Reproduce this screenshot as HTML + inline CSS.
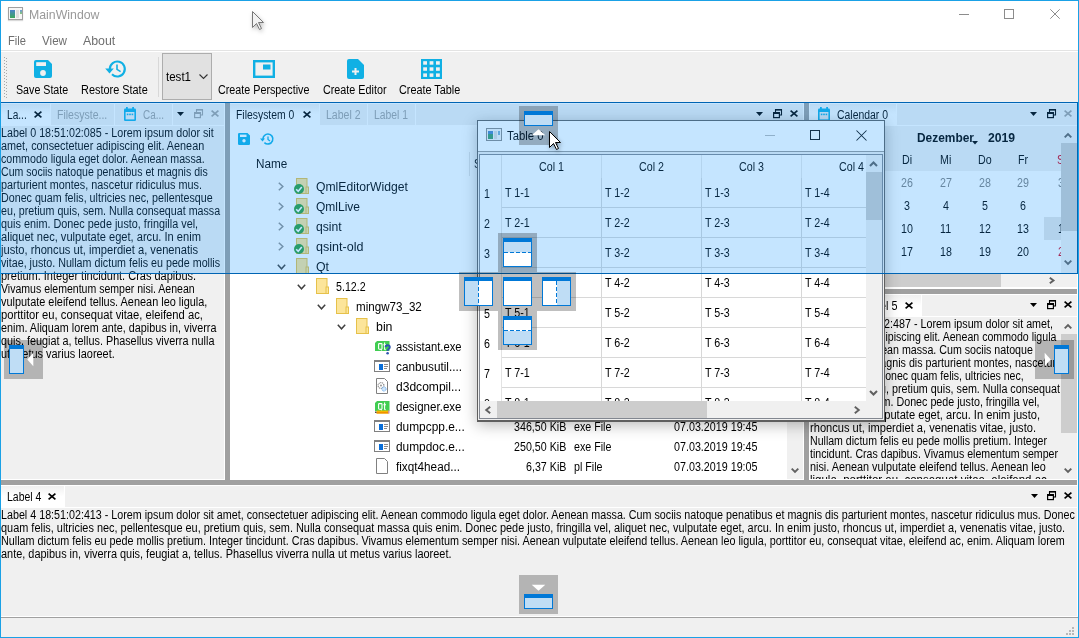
<!DOCTYPE html>
<html><head><meta charset="utf-8"><style>
html,body{margin:0;padding:0;}
body{width:1079px;height:638px;overflow:hidden;position:relative;background:#f0f0f0;font-family:"Liberation Sans",sans-serif;}
.tx{position:absolute;white-space:pre;transform-origin:0 0;}
svg{overflow:visible}
</style></head><body>
<div style="position:absolute;left:0px;top:0px;width:1079px;height:30px;background:#fff"></div>
<div style="position:absolute;left:0px;top:30px;width:1079px;height:20px;background:#fff"></div>
<div style="position:absolute;left:0px;top:50px;width:1079px;height:1px;background:#e3e3e3"></div>
<div style="position:absolute;left:0px;top:51px;width:1079px;height:1px;background:#fff"></div>
<div style="position:absolute;left:8px;top:7px;width:15px;height:13px;box-sizing:border-box;border:1px solid #a0a0a0;background:#f6f6f6;box-shadow:0 1px 1px rgba(0,0,0,0.15)"></div>
<div style="position:absolute;left:10px;top:10px;width:5px;height:8px;background:linear-gradient(#4a82c8,#3aa85a)"></div>
<div style="position:absolute;left:16px;top:10px;width:3px;height:8px;background:#dedede"></div>
<div style="position:absolute;left:20px;top:10px;width:2px;height:4px;background:linear-gradient(#6a9ad8,#8ac878)"></div>
<div class="tx" style="left:28.70px;top:8px;color:#999;font:13.5px 'Liberation Sans';line-height:13px;transform:scaleX(0.9123);">MainWindow</div>
<div style="position:absolute;left:959px;top:14px;width:10px;height:1px;background:#8c8c8c"></div>
<div style="position:absolute;left:1004px;top:9px;width:10px;height:10px;box-sizing:border-box;border:1px solid #8c8c8c"></div>
<svg style="position:absolute;left:1050px;top:9px;" width="10" height="10" viewBox="0 0 10 10"><path d="M0.3 0.3L9.7 9.7M9.7 0.3L0.3 9.7" stroke="#8c8c8c" stroke-width="1"/></svg>
<div class="tx" style="left:8.30px;top:35px;color:#6f6f6f;font:12px 'Liberation Sans';line-height:13px;transform:scaleX(0.9309);">File</div>
<div class="tx" style="left:42.00px;top:35px;color:#6f6f6f;font:12px 'Liberation Sans';line-height:13px;transform:scaleX(0.9693);">View</div>
<div class="tx" style="left:83.30px;top:35px;color:#6f6f6f;font:12px 'Liberation Sans';line-height:13px;transform:scaleX(1.0300);">About</div>
<div style="position:absolute;left:4px;top:57px;width:1px;height:1px;background:#a8a8a8"></div>
<div style="position:absolute;left:6px;top:58px;width:1px;height:1px;background:#a8a8a8"></div>
<div style="position:absolute;left:4px;top:60px;width:1px;height:1px;background:#a8a8a8"></div>
<div style="position:absolute;left:6px;top:61px;width:1px;height:1px;background:#a8a8a8"></div>
<div style="position:absolute;left:4px;top:63px;width:1px;height:1px;background:#a8a8a8"></div>
<div style="position:absolute;left:6px;top:64px;width:1px;height:1px;background:#a8a8a8"></div>
<div style="position:absolute;left:4px;top:66px;width:1px;height:1px;background:#a8a8a8"></div>
<div style="position:absolute;left:6px;top:67px;width:1px;height:1px;background:#a8a8a8"></div>
<div style="position:absolute;left:4px;top:69px;width:1px;height:1px;background:#a8a8a8"></div>
<div style="position:absolute;left:6px;top:70px;width:1px;height:1px;background:#a8a8a8"></div>
<div style="position:absolute;left:4px;top:72px;width:1px;height:1px;background:#a8a8a8"></div>
<div style="position:absolute;left:6px;top:73px;width:1px;height:1px;background:#a8a8a8"></div>
<div style="position:absolute;left:4px;top:75px;width:1px;height:1px;background:#a8a8a8"></div>
<div style="position:absolute;left:6px;top:76px;width:1px;height:1px;background:#a8a8a8"></div>
<div style="position:absolute;left:4px;top:78px;width:1px;height:1px;background:#a8a8a8"></div>
<div style="position:absolute;left:6px;top:79px;width:1px;height:1px;background:#a8a8a8"></div>
<div style="position:absolute;left:4px;top:81px;width:1px;height:1px;background:#a8a8a8"></div>
<div style="position:absolute;left:6px;top:82px;width:1px;height:1px;background:#a8a8a8"></div>
<div style="position:absolute;left:4px;top:84px;width:1px;height:1px;background:#a8a8a8"></div>
<div style="position:absolute;left:6px;top:85px;width:1px;height:1px;background:#a8a8a8"></div>
<div style="position:absolute;left:4px;top:87px;width:1px;height:1px;background:#a8a8a8"></div>
<div style="position:absolute;left:6px;top:88px;width:1px;height:1px;background:#a8a8a8"></div>
<div style="position:absolute;left:4px;top:90px;width:1px;height:1px;background:#a8a8a8"></div>
<div style="position:absolute;left:6px;top:91px;width:1px;height:1px;background:#a8a8a8"></div>
<div style="position:absolute;left:4px;top:93px;width:1px;height:1px;background:#a8a8a8"></div>
<div style="position:absolute;left:6px;top:94px;width:1px;height:1px;background:#a8a8a8"></div>
<div style="position:absolute;left:4px;top:96px;width:1px;height:1px;background:#a8a8a8"></div>
<div style="position:absolute;left:6px;top:97px;width:1px;height:1px;background:#a8a8a8"></div>
<svg style="position:absolute;left:34px;top:60px;" width="18" height="18" viewBox="0 0 18 18"><path d="M0 2a2 2 0 0 1 2-2h12l4 4v12a2 2 0 0 1-2 2H2a2 2 0 0 1-2-2z" fill="#10b0e4"/><rect x="2.2" y="2.2" width="9.8" height="3.8" fill="#f0f0f0"/><circle cx="9" cy="13" r="2.9" fill="#f0f0f0"/></svg>
<div class="tx" style="left:15.60px;top:84px;color:#000;font:12px 'Liberation Sans';line-height:13px;transform:scaleX(0.8892);">Save State</div>
<svg style="position:absolute;left:104px;top:59px;" width="22" height="20" viewBox="0 0 22 20"><path d="M5.8 10A7.5 7.5 0 1 1 8 15.3" fill="none" stroke="#10b0e4" stroke-width="2.1"/><path d="M1.2 9.6H9.8L5.5 14.4z" fill="#10b0e4"/><path d="M13 5.6V10.4L16.6 12.6" fill="none" stroke="#10b0e4" stroke-width="1.6"/></svg>
<div class="tx" style="left:81.20px;top:84px;color:#000;font:12px 'Liberation Sans';line-height:13px;transform:scaleX(0.9091);">Restore State</div>
<div style="position:absolute;left:158px;top:57px;width:1px;height:40px;background:#d8d8d8"></div>
<div style="position:absolute;left:162px;top:53px;width:50px;height:47px;box-sizing:border-box;border:1px solid #adadad;background:#e1e1e1"></div>
<div class="tx" style="left:165.70px;top:71px;color:#000;font:12px 'Liberation Sans';line-height:13px;transform:scaleX(0.9610);">test1</div>
<svg style="position:absolute;left:199px;top:74px;" width="9" height="6" viewBox="0 0 9 6"><path d="M0.5 0.5L4.5 4.5L8.5 0.5" fill="none" stroke="#333" stroke-width="1.1"/></svg>
<svg style="position:absolute;left:253px;top:60px;" width="22" height="18" viewBox="0 0 22 18"><rect x="1.2" y="1.2" width="19.6" height="15.6" fill="none" stroke="#10b0e4" stroke-width="2.4"/><rect x="10" y="4.5" width="7.5" height="5" fill="#10b0e4"/></svg>
<div class="tx" style="left:217.60px;top:84px;color:#000;font:12px 'Liberation Sans';line-height:13px;transform:scaleX(0.8957);">Create Perspective</div>
<svg style="position:absolute;left:347px;top:59px;" width="17" height="20" viewBox="0 0 17 20"><path d="M0 2a2 2 0 0 1 2-2h9l6 6v12a2 2 0 0 1-2 2H2a2 2 0 0 1-2-2z" fill="#10b0e4"/><path d="M8.5 9v7M5 12.5h7" stroke="#f0f0f0" stroke-width="2"/></svg>
<div class="tx" style="left:322.50px;top:84px;color:#000;font:12px 'Liberation Sans';line-height:13px;transform:scaleX(0.8982);">Create Editor</div>
<svg style="position:absolute;left:421px;top:59px;" width="21" height="20" viewBox="0 0 21 20"><rect x="0" y="0" width="21" height="20" fill="#10b0e4"/><rect x="2.2" y="2.2" width="3.8" height="3.5" fill="#f0f0f0"/><rect x="2.2" y="8.3" width="3.8" height="3.5" fill="#f0f0f0"/><rect x="2.2" y="14.399999999999999" width="3.8" height="3.5" fill="#f0f0f0"/><rect x="8.600000000000001" y="2.2" width="3.8" height="3.5" fill="#f0f0f0"/><rect x="8.600000000000001" y="8.3" width="3.8" height="3.5" fill="#f0f0f0"/><rect x="8.600000000000001" y="14.399999999999999" width="3.8" height="3.5" fill="#f0f0f0"/><rect x="15.0" y="2.2" width="3.8" height="3.5" fill="#f0f0f0"/><rect x="15.0" y="8.3" width="3.8" height="3.5" fill="#f0f0f0"/><rect x="15.0" y="14.399999999999999" width="3.8" height="3.5" fill="#f0f0f0"/></svg>
<div class="tx" style="left:399.30px;top:84px;color:#000;font:12px 'Liberation Sans';line-height:13px;transform:scaleX(0.9039);">Create Table</div>
<div style="position:absolute;left:0px;top:616px;width:1079px;height:1px;background:#fff"></div>
<div style="position:absolute;left:0px;top:617px;width:1079px;height:1px;background:#a0a0a0"></div>
<div style="position:absolute;left:225px;top:102px;width:5px;height:378px;background:#a0a0a0"></div>
<div style="position:absolute;left:804px;top:102px;width:5px;height:378px;background:#a0a0a0"></div>
<div style="position:absolute;left:809px;top:289px;width:269px;height:5px;background:#a0a0a0"></div>
<div style="position:absolute;left:0px;top:480px;width:1079px;height:5px;background:#a0a0a0"></div>
<div style="position:absolute;left:1px;top:102px;width:224px;height:378px;background:#f0f0f0"></div>
<div style="position:absolute;left:1px;top:103px;width:224px;height:1px;background:#fff"></div>
<div style="position:absolute;left:1px;top:125px;width:224px;height:1px;background:#fff"></div>
<div style="position:absolute;left:1px;top:104px;width:49px;height:21px;background:linear-gradient(#f0f0f0,#fff 50%,#fff)"></div>
<div style="position:absolute;left:50px;top:104px;width:1px;height:21px;background:#fff"></div>
<div class="tx" style="left:6.60px;top:109px;color:#000;font:12px 'Liberation Sans';line-height:13px;transform:scaleX(0.8437);">La...</div>
<svg style="position:absolute;left:34px;top:111px;" width="8" height="7" viewBox="0 0 8 7"><path d="M0.6 0.6L7.4 6.4M7.4 0.6L0.6 6.4" stroke="#000" stroke-width="1.7"/></svg>
<div style="position:absolute;left:51px;top:104px;width:63px;height:21px;background:#f0f0f0"></div>
<div style="position:absolute;left:114px;top:104px;width:1px;height:21px;background:#fff"></div>
<div class="tx" style="left:56.70px;top:109px;color:#a0a0a0;font:12px 'Liberation Sans';line-height:13px;transform:scaleX(0.8771);">Filesyste...</div>
<div style="position:absolute;left:115px;top:104px;width:57px;height:21px;background:#f0f0f0"></div>
<div style="position:absolute;left:172px;top:104px;width:1px;height:21px;background:#fff"></div>
<svg style="position:absolute;left:124px;top:107px;" width="12" height="14" viewBox="0 0 12 14"><rect x="0" y="1.5" width="12" height="12.5" rx="1.2" fill="#10b0e4"/><rect x="1.6" y="5" width="8.8" height="7.4" fill="#f0f0f0"/><rect x="2" y="0" width="1.8" height="3" fill="#10b0e4"/><rect x="8.2" y="0" width="1.8" height="3" fill="#10b0e4"/><rect x="2.8" y="6.6" width="1.6" height="1.6" fill="#10b0e4"/><rect x="5.2" y="6.6" width="1.6" height="1.6" fill="#10b0e4"/><rect x="7.6" y="6.6" width="1.6" height="1.6" fill="#10b0e4"/></svg>
<div class="tx" style="left:143.00px;top:109px;color:#a0a0a0;font:12px 'Liberation Sans';line-height:13px;transform:scaleX(0.8287);">Ca...</div>
<svg style="position:absolute;left:177px;top:112px;" width="7" height="4" viewBox="0 0 7 4"><path d="M0 0H7L3.5 4z" fill="#000"/></svg>
<svg style="position:absolute;left:194px;top:109px;" width="9" height="9" viewBox="0 0 9 9"><path d="M2.5 3V0.5h6v5.5H6" fill="none" stroke="#a0a0a0" stroke-width="1.1"/><rect x="2" y="0" width="7" height="1.6" fill="#a0a0a0"/><rect x="0.6" y="3.6" width="5.8" height="5" fill="none" stroke="#a0a0a0" stroke-width="1.2"/><rect x="0" y="3" width="7" height="2" fill="#a0a0a0"/></svg>
<svg style="position:absolute;left:211px;top:110px;" width="8" height="7" viewBox="0 0 8 7"><path d="M0.6 0.6L7.4 6.4M7.4 0.6L0.6 6.4" stroke="#a0a0a0" stroke-width="1.7"/></svg>
<div class="tx" style="left:0.50px;top:127px;color:#000;font:12px 'Liberation Sans';line-height:13px;transform:scaleX(0.8932);">Label 0 18:51:02:085 - Lorem ipsum dolor sit</div>
<div class="tx" style="left:0.50px;top:140px;color:#000;font:12px 'Liberation Sans';line-height:13px;transform:scaleX(0.9039);">amet, consectetuer adipiscing elit. Aenean</div>
<div class="tx" style="left:0.50px;top:153px;color:#000;font:12px 'Liberation Sans';line-height:13px;transform:scaleX(0.8873);">commodo ligula eget dolor. Aenean massa.</div>
<div class="tx" style="left:0.50px;top:166px;color:#000;font:12px 'Liberation Sans';line-height:13px;transform:scaleX(0.8803);">Cum sociis natoque penatibus et magnis dis</div>
<div class="tx" style="left:0.50px;top:179px;color:#000;font:12px 'Liberation Sans';line-height:13px;transform:scaleX(0.9023);">parturient montes, nascetur ridiculus mus.</div>
<div class="tx" style="left:0.50px;top:192px;color:#000;font:12px 'Liberation Sans';line-height:13px;transform:scaleX(0.8915);">Donec quam felis, ultricies nec, pellentesque</div>
<div class="tx" style="left:0.50px;top:205px;color:#000;font:12px 'Liberation Sans';line-height:13px;transform:scaleX(0.8902);">eu, pretium quis, sem. Nulla consequat massa</div>
<div class="tx" style="left:0.50px;top:218px;color:#000;font:12px 'Liberation Sans';line-height:13px;transform:scaleX(0.9037);">quis enim. Donec pede justo, fringilla vel,</div>
<div class="tx" style="left:0.50px;top:231px;color:#000;font:12px 'Liberation Sans';line-height:13px;transform:scaleX(0.9249);">aliquet nec, vulputate eget, arcu. In enim</div>
<div class="tx" style="left:0.50px;top:244px;color:#000;font:12px 'Liberation Sans';line-height:13px;transform:scaleX(0.9292);">justo, rhoncus ut, imperdiet a, venenatis</div>
<div class="tx" style="left:0.50px;top:257px;color:#000;font:12px 'Liberation Sans';line-height:13px;transform:scaleX(0.8927);">vitae, justo. Nullam dictum felis eu pede mollis</div>
<div class="tx" style="left:0.50px;top:270px;color:#000;font:12px 'Liberation Sans';line-height:13px;transform:scaleX(0.9169);">pretium. Integer tincidunt. Cras dapibus.</div>
<div class="tx" style="left:0.50px;top:283px;color:#000;font:12px 'Liberation Sans';line-height:13px;transform:scaleX(0.8779);">Vivamus elementum semper nisi. Aenean</div>
<div class="tx" style="left:0.50px;top:296px;color:#000;font:12px 'Liberation Sans';line-height:13px;transform:scaleX(0.9099);">vulputate eleifend tellus. Aenean leo ligula,</div>
<div class="tx" style="left:0.50px;top:309px;color:#000;font:12px 'Liberation Sans';line-height:13px;transform:scaleX(0.9341);">porttitor eu, consequat vitae, eleifend ac,</div>
<div class="tx" style="left:0.50px;top:322px;color:#000;font:12px 'Liberation Sans';line-height:13px;transform:scaleX(0.8996);">enim. Aliquam lorem ante, dapibus in, viverra</div>
<div class="tx" style="left:0.50px;top:335px;color:#000;font:12px 'Liberation Sans';line-height:13px;transform:scaleX(0.9038);">quis, feugiat a, tellus. Phasellus viverra nulla</div>
<div class="tx" style="left:0.50px;top:348px;color:#000;font:12px 'Liberation Sans';line-height:13px;transform:scaleX(0.9124);">ut metus varius laoreet.</div>
<div style="position:absolute;left:1px;top:485px;width:1077px;height:131px;background:#f0f0f0"></div>
<div style="position:absolute;left:1px;top:485px;width:1077px;height:1px;background:#fff"></div>
<div style="position:absolute;left:1px;top:507px;width:1077px;height:1px;background:#fff"></div>
<div style="position:absolute;left:1px;top:486px;width:63px;height:21px;background:linear-gradient(#f0f0f0,#fff 50%,#fff)"></div>
<div style="position:absolute;left:64px;top:486px;width:1px;height:21px;background:#fff"></div>
<div class="tx" style="left:6.60px;top:491px;color:#000;font:12px 'Liberation Sans';line-height:13px;transform:scaleX(0.8738);">Label 4</div>
<svg style="position:absolute;left:48px;top:493px;" width="8" height="7" viewBox="0 0 8 7"><path d="M0.6 0.6L7.4 6.4M7.4 0.6L0.6 6.4" stroke="#000" stroke-width="1.7"/></svg>
<svg style="position:absolute;left:1031px;top:494px;" width="7" height="4" viewBox="0 0 7 4"><path d="M0 0H7L3.5 4z" fill="#000"/></svg>
<svg style="position:absolute;left:1047px;top:491px;" width="9" height="9" viewBox="0 0 9 9"><path d="M2.5 3V0.5h6v5.5H6" fill="none" stroke="#000" stroke-width="1.1"/><rect x="2" y="0" width="7" height="1.6" fill="#000"/><rect x="0.6" y="3.6" width="5.8" height="5" fill="none" stroke="#000" stroke-width="1.2"/><rect x="0" y="3" width="7" height="2" fill="#000"/></svg>
<svg style="position:absolute;left:1064px;top:492px;" width="8" height="7" viewBox="0 0 8 7"><path d="M0.6 0.6L7.4 6.4M7.4 0.6L0.6 6.4" stroke="#000" stroke-width="1.7"/></svg>
<div class="tx" style="left:1.00px;top:509px;color:#000;font:12px 'Liberation Sans';line-height:13px;transform:scaleX(0.8938);">Label 4 18:51:02:413 - Lorem ipsum dolor sit amet, consectetuer adipiscing elit. Aenean commodo ligula eget dolor. Aenean massa. Cum sociis natoque penatibus et magnis dis parturient montes, nascetur ridiculus mus. Donec</div>
<div class="tx" style="left:1.00px;top:522px;color:#000;font:12px 'Liberation Sans';line-height:13px;transform:scaleX(0.9100);">quam felis, ultricies nec, pellentesque eu, pretium quis, sem. Nulla consequat massa quis enim. Donec pede justo, fringilla vel, aliquet nec, vulputate eget, arcu. In enim justo, rhoncus ut, imperdiet a, venenatis vitae, justo.</div>
<div class="tx" style="left:1.00px;top:535px;color:#000;font:12px 'Liberation Sans';line-height:13px;transform:scaleX(0.8991);">Nullam dictum felis eu pede mollis pretium. Integer tincidunt. Cras dapibus. Vivamus elementum semper nisi. Aenean vulputate eleifend tellus. Aenean leo ligula, porttitor eu, consequat vitae, eleifend ac, enim. Aliquam lorem</div>
<div class="tx" style="left:1.00px;top:548px;color:#000;font:12px 'Liberation Sans';line-height:13px;transform:scaleX(0.9102);">ante, dapibus in, viverra quis, feugiat a, tellus. Phasellus viverra nulla ut metus varius laoreet.</div>
<div style="position:absolute;left:230px;top:102px;width:574px;height:378px;background:#f0f0f0"></div>
<div style="position:absolute;left:230px;top:103px;width:574px;height:1px;background:#fff"></div>
<div style="position:absolute;left:230px;top:125px;width:574px;height:1px;background:#fff"></div>
<div style="position:absolute;left:230px;top:104px;width:89px;height:21px;background:linear-gradient(#f0f0f0,#fff 50%,#fff)"></div>
<div style="position:absolute;left:319px;top:104px;width:1px;height:21px;background:#fff"></div>
<div class="tx" style="left:236.00px;top:109px;color:#000;font:12px 'Liberation Sans';line-height:13px;transform:scaleX(0.8657);">Filesystem 0</div>
<svg style="position:absolute;left:303px;top:111px;" width="8" height="7" viewBox="0 0 8 7"><path d="M0.6 0.6L7.4 6.4M7.4 0.6L0.6 6.4" stroke="#000" stroke-width="1.7"/></svg>
<div style="position:absolute;left:320px;top:104px;width:47px;height:21px;background:#f0f0f0"></div>
<div style="position:absolute;left:367px;top:104px;width:1px;height:21px;background:#fff"></div>
<div class="tx" style="left:325.50px;top:109px;color:#a0a0a0;font:12px 'Liberation Sans';line-height:13px;transform:scaleX(0.8763);">Label 2</div>
<div style="position:absolute;left:368px;top:104px;width:47px;height:21px;background:#f0f0f0"></div>
<div style="position:absolute;left:415px;top:104px;width:1px;height:21px;background:#fff"></div>
<div class="tx" style="left:373.50px;top:109px;color:#a0a0a0;font:12px 'Liberation Sans';line-height:13px;transform:scaleX(0.8636);">Label 1</div>
<svg style="position:absolute;left:756px;top:112px;" width="7" height="4" viewBox="0 0 7 4"><path d="M0 0H7L3.5 4z" fill="#000"/></svg>
<svg style="position:absolute;left:773px;top:109px;" width="9" height="9" viewBox="0 0 9 9"><path d="M2.5 3V0.5h6v5.5H6" fill="none" stroke="#000" stroke-width="1.1"/><rect x="2" y="0" width="7" height="1.6" fill="#000"/><rect x="0.6" y="3.6" width="5.8" height="5" fill="none" stroke="#000" stroke-width="1.2"/><rect x="0" y="3" width="7" height="2" fill="#000"/></svg>
<svg style="position:absolute;left:790px;top:110px;" width="8" height="7" viewBox="0 0 8 7"><path d="M0.6 0.6L7.4 6.4M7.4 0.6L0.6 6.4" stroke="#000" stroke-width="1.7"/></svg>
<div style="position:absolute;left:230px;top:126px;width:574px;height:354px;background:#fff"></div>
<svg style="position:absolute;left:238px;top:133px;" width="12" height="12" viewBox="0 0 12 12"><path d="M0 1.2a1.2 1.2 0 0 1 1.2-1.2h8.3l2.5 2.5v8.3a1.2 1.2 0 0 1-1.2 1.2H1.2A1.2 1.2 0 0 1 0 10.8z" fill="#10b0e4"/><rect x="2" y="1.6" width="6.5" height="2.4" fill="#fff"/><circle cx="6" cy="7.8" r="1.7" fill="#fff"/></svg>
<svg style="position:absolute;left:260px;top:133px;" width="14" height="12" viewBox="0 0 14 12"><path d="M8 1a5 5 0 1 1-3.6 8.6" fill="none" stroke="#10b0e4" stroke-width="1.6"/><path d="M3 6a5 5 0 0 1 5-5" fill="none" stroke="#10b0e4" stroke-width="1.6"/><path d="M0 5.6h5l-2.5 3z" fill="#10b0e4"/><path d="M8 3.5v3l2 1.5" fill="none" stroke="#10b0e4" stroke-width="1.3"/></svg>
<div class="tx" style="left:255.70px;top:158px;color:#000;font:12px 'Liberation Sans';line-height:13px;transform:scaleX(0.9778);">Name</div>
<div style="position:absolute;left:469px;top:152px;width:1px;height:24px;background:#e5e5e5"></div>
<div class="tx" style="left:474.00px;top:158px;color:#000;font:12px 'Liberation Sans';line-height:13px;transform:scaleX(0.8568);">Size</div>
<div style="position:absolute;left:787px;top:126px;width:16px;height:353px;background:#f0f0f0"></div>
<svg style="position:absolute;left:791px;top:468px;" width="8" height="5" viewBox="0 0 8 5"><path d="M0.7 0.7L4 4L7.3 0.7" fill="none" stroke="#606060" stroke-width="1.9"/></svg>
<svg style="position:absolute;left:278px;top:182px;" width="6" height="9" viewBox="0 0 6 9"><path d="M0.8 0.8L4.8 4.5L0.8 8.2" fill="none" stroke="#909090" stroke-width="1.5"/></svg>
<svg style="position:absolute;left:296px;top:178px;" width="14" height="16" viewBox="0 0 14 16"><rect x="0.5" y="0.5" width="10.5" height="15" fill="#fce59a" stroke="#e6c14a" stroke-width="1"/><rect x="10" y="9" width="2.5" height="6.5" fill="#fce59a" stroke="#e6c14a" stroke-width="1"/></svg>
<svg style="position:absolute;left:294px;top:184px;" width="10" height="10" viewBox="0 0 10 10"><circle cx="5" cy="5" r="5" fill="#2e9e3a"/><path d="M2.2 5.2L4.2 7.2L7.8 3" fill="none" stroke="#fff" stroke-width="1.6"/></svg>
<div class="tx" style="left:315.90px;top:181px;color:#000;font:12px 'Liberation Sans';line-height:13px;transform:scaleX(1.0144);">QmlEditorWidget</div>
<svg style="position:absolute;left:278px;top:202px;" width="6" height="9" viewBox="0 0 6 9"><path d="M0.8 0.8L4.8 4.5L0.8 8.2" fill="none" stroke="#909090" stroke-width="1.5"/></svg>
<svg style="position:absolute;left:296px;top:198px;" width="14" height="16" viewBox="0 0 14 16"><rect x="0.5" y="0.5" width="10.5" height="15" fill="#fce59a" stroke="#e6c14a" stroke-width="1"/><rect x="10" y="9" width="2.5" height="6.5" fill="#fce59a" stroke="#e6c14a" stroke-width="1"/></svg>
<svg style="position:absolute;left:294px;top:204px;" width="10" height="10" viewBox="0 0 10 10"><circle cx="5" cy="5" r="5" fill="#2e9e3a"/><path d="M2.2 5.2L4.2 7.2L7.8 3" fill="none" stroke="#fff" stroke-width="1.6"/></svg>
<div class="tx" style="left:315.90px;top:201px;color:#000;font:12px 'Liberation Sans';line-height:13px;transform:scaleX(0.9998);">QmlLive</div>
<svg style="position:absolute;left:278px;top:222px;" width="6" height="9" viewBox="0 0 6 9"><path d="M0.8 0.8L4.8 4.5L0.8 8.2" fill="none" stroke="#909090" stroke-width="1.5"/></svg>
<svg style="position:absolute;left:296px;top:218px;" width="14" height="16" viewBox="0 0 14 16"><rect x="0.5" y="0.5" width="10.5" height="15" fill="#fce59a" stroke="#e6c14a" stroke-width="1"/><rect x="10" y="9" width="2.5" height="6.5" fill="#fce59a" stroke="#e6c14a" stroke-width="1"/></svg>
<svg style="position:absolute;left:294px;top:224px;" width="10" height="10" viewBox="0 0 10 10"><circle cx="5" cy="5" r="5" fill="#2e9e3a"/><path d="M2.2 5.2L4.2 7.2L7.8 3" fill="none" stroke="#fff" stroke-width="1.6"/></svg>
<div class="tx" style="left:315.90px;top:221px;color:#000;font:12px 'Liberation Sans';line-height:13px;transform:scaleX(1.0139);">qsint</div>
<svg style="position:absolute;left:278px;top:242px;" width="6" height="9" viewBox="0 0 6 9"><path d="M0.8 0.8L4.8 4.5L0.8 8.2" fill="none" stroke="#909090" stroke-width="1.5"/></svg>
<svg style="position:absolute;left:296px;top:238px;" width="14" height="16" viewBox="0 0 14 16"><rect x="0.5" y="0.5" width="10.5" height="15" fill="#fce59a" stroke="#e6c14a" stroke-width="1"/><rect x="10" y="9" width="2.5" height="6.5" fill="#fce59a" stroke="#e6c14a" stroke-width="1"/></svg>
<svg style="position:absolute;left:294px;top:244px;" width="10" height="10" viewBox="0 0 10 10"><circle cx="5" cy="5" r="5" fill="#2e9e3a"/><path d="M2.2 5.2L4.2 7.2L7.8 3" fill="none" stroke="#fff" stroke-width="1.6"/></svg>
<div class="tx" style="left:315.90px;top:241px;color:#000;font:12px 'Liberation Sans';line-height:13px;transform:scaleX(1.0450);">qsint-old</div>
<svg style="position:absolute;left:277px;top:264px;" width="9" height="6" viewBox="0 0 9 6"><path d="M0.8 0.8L4.5 4.8L8.2 0.8" fill="none" stroke="#404040" stroke-width="1.5"/></svg>
<svg style="position:absolute;left:296px;top:258px;" width="14" height="16" viewBox="0 0 14 16"><rect x="0.5" y="0.5" width="10.5" height="15" fill="#fce59a" stroke="#e6c14a" stroke-width="1"/><rect x="10" y="9" width="2.5" height="6.5" fill="#fce59a" stroke="#e6c14a" stroke-width="1"/></svg>
<div class="tx" style="left:315.90px;top:261px;color:#000;font:12px 'Liberation Sans';line-height:13px;transform:scaleX(1.0262);">Qt</div>
<svg style="position:absolute;left:297px;top:284px;" width="9" height="6" viewBox="0 0 9 6"><path d="M0.8 0.8L4.5 4.8L8.2 0.8" fill="none" stroke="#404040" stroke-width="1.5"/></svg>
<svg style="position:absolute;left:316px;top:278px;" width="14" height="16" viewBox="0 0 14 16"><rect x="0.5" y="0.5" width="10.5" height="15" fill="#fce59a" stroke="#e6c14a" stroke-width="1"/><rect x="10" y="9" width="2.5" height="6.5" fill="#fce59a" stroke="#e6c14a" stroke-width="1"/></svg>
<div class="tx" style="left:335.90px;top:281px;color:#000;font:12px 'Liberation Sans';line-height:13px;transform:scaleX(0.8872);">5.12.2</div>
<svg style="position:absolute;left:317px;top:304px;" width="9" height="6" viewBox="0 0 9 6"><path d="M0.8 0.8L4.5 4.8L8.2 0.8" fill="none" stroke="#404040" stroke-width="1.5"/></svg>
<svg style="position:absolute;left:336px;top:298px;" width="14" height="16" viewBox="0 0 14 16"><rect x="0.5" y="0.5" width="10.5" height="15" fill="#fce59a" stroke="#e6c14a" stroke-width="1"/><rect x="10" y="9" width="2.5" height="6.5" fill="#fce59a" stroke="#e6c14a" stroke-width="1"/></svg>
<div class="tx" style="left:355.90px;top:301px;color:#000;font:12px 'Liberation Sans';line-height:13px;transform:scaleX(0.9670);">mingw73_32</div>
<svg style="position:absolute;left:337px;top:324px;" width="9" height="6" viewBox="0 0 9 6"><path d="M0.8 0.8L4.5 4.8L8.2 0.8" fill="none" stroke="#404040" stroke-width="1.5"/></svg>
<svg style="position:absolute;left:356px;top:318px;" width="14" height="16" viewBox="0 0 14 16"><rect x="0.5" y="0.5" width="10.5" height="15" fill="#fce59a" stroke="#e6c14a" stroke-width="1"/><rect x="10" y="9" width="2.5" height="6.5" fill="#fce59a" stroke="#e6c14a" stroke-width="1"/></svg>
<div class="tx" style="left:375.90px;top:321px;color:#000;font:12px 'Liberation Sans';line-height:13px;transform:scaleX(1.0304);">bin</div>
<svg style="position:absolute;left:375px;top:341px;" width="16" height="14" viewBox="0 0 16 14"><path d="M0 2L2 0H14.5V10H0z" fill="#41cd52"/><rect x="3.6" y="2.6" width="3.4" height="5.6" rx="0.6" fill="none" stroke="#fff" stroke-width="1.1"/><path d="M5.6 8L6.8 9.3" stroke="#fff" stroke-width="1.1"/><path d="M9.6 1.6V8.2Q9.6 8.8 10.8 8.8M8.4 3.7H11" fill="none" stroke="#fff" stroke-width="1.1"/><path d="M10.6 6.2Q10.6 4.2 12.6 4.2Q14.8 4.2 14.8 6.2Q14.8 7.4 13.4 8.2Q12.6 8.7 12.6 10" fill="none" stroke="#2f56b0" stroke-width="1.9"/><circle cx="12.6" cy="12.3" r="1.3" fill="#2f56b0"/></svg>
<div class="tx" style="left:395.90px;top:341px;color:#000;font:12px 'Liberation Sans';line-height:13px;transform:scaleX(0.9352);">assistant.exe</div>
<svg style="position:absolute;left:374px;top:360px;" width="16" height="12" viewBox="0 0 16 12"><rect x="0.5" y="0.5" width="15" height="11" fill="#fff" stroke="#808080"/><rect x="0" y="0" width="16" height="2" fill="#808080"/><rect x="5" y="4" width="4" height="6" fill="#0a6ed8"/><path d="M10 4.5h4M10 6.5h4M10 8.5h3" stroke="#8a8a8a" stroke-width="1"/></svg>
<div class="tx" style="left:395.90px;top:361px;color:#000;font:12px 'Liberation Sans';line-height:13px;transform:scaleX(0.9796);">canbusutil....</div>
<svg style="position:absolute;left:376px;top:378px;" width="12" height="16" viewBox="0 0 12 16"><path d="M0.5 0.5H8.5L11.5 3.5V15.5H0.5z" fill="#fff" stroke="#808080"/><circle cx="5" cy="7.5" r="2.9" fill="none" stroke="#8a8a8a" stroke-width="1.2" stroke-dasharray="1.1 0.7"/><circle cx="5" cy="7.5" r="0.9" fill="#8a8a8a"/><circle cx="8" cy="11" r="2.1" fill="#cfe6fb" stroke="#5aa0e6" stroke-width="0.9" stroke-dasharray="0.9 0.5"/></svg>
<div class="tx" style="left:395.90px;top:381px;color:#000;font:12px 'Liberation Sans';line-height:13px;transform:scaleX(1.0046);">d3dcompil...</div>
<svg style="position:absolute;left:375px;top:401px;" width="16" height="14" viewBox="0 0 16 14"><path d="M0 2L2 0H14.5V10H0z" fill="#41cd52"/><rect x="3.6" y="2.6" width="3.4" height="5.6" rx="0.6" fill="none" stroke="#fff" stroke-width="1.1"/><path d="M5.6 8L6.8 9.3" stroke="#fff" stroke-width="1.1"/><path d="M9.6 1.6V8.2Q9.6 8.8 10.8 8.8M8.4 3.7H11" fill="none" stroke="#fff" stroke-width="1.1"/><rect x="1.5" y="9.5" width="12" height="3" fill="#f5b800"/><rect x="1.5" y="11" width="12" height="1.5" fill="#f09000"/><rect x="13" y="9.5" width="1.5" height="3" fill="#d090a0"/><rect x="0" y="10.5" width="1.5" height="1.5" fill="#505050"/></svg>
<div class="tx" style="left:395.90px;top:401px;color:#000;font:12px 'Liberation Sans';line-height:13px;transform:scaleX(0.9625);">designer.exe</div>
<svg style="position:absolute;left:374px;top:420px;" width="16" height="12" viewBox="0 0 16 12"><rect x="0.5" y="0.5" width="15" height="11" fill="#fff" stroke="#808080"/><rect x="0" y="0" width="16" height="2" fill="#808080"/><rect x="5" y="4" width="4" height="6" fill="#0a6ed8"/><path d="M10 4.5h4M10 6.5h4M10 8.5h3" stroke="#8a8a8a" stroke-width="1"/></svg>
<div class="tx" style="left:395.90px;top:421px;color:#000;font:12px 'Liberation Sans';line-height:13px;transform:scaleX(0.9903);">dumpcpp.e...</div>
<svg style="position:absolute;left:374px;top:440px;" width="16" height="12" viewBox="0 0 16 12"><rect x="0.5" y="0.5" width="15" height="11" fill="#fff" stroke="#808080"/><rect x="0" y="0" width="16" height="2" fill="#808080"/><rect x="5" y="4" width="4" height="6" fill="#0a6ed8"/><path d="M10 4.5h4M10 6.5h4M10 8.5h3" stroke="#8a8a8a" stroke-width="1"/></svg>
<div class="tx" style="left:395.90px;top:441px;color:#000;font:12px 'Liberation Sans';line-height:13px;transform:scaleX(0.9903);">dumpdoc.e...</div>
<svg style="position:absolute;left:376px;top:458px;" width="12" height="16" viewBox="0 0 12 16"><path d="M0.5 0.5H8.5L11.5 3.5V15.5H0.5z" fill="#fff" stroke="#808080"/></svg>
<div class="tx" style="left:395.90px;top:461px;color:#000;font:12px 'Liberation Sans';line-height:13px;transform:scaleX(0.9789);">fixqt4head...</div>
<div class="tx" style="left:514.25px;top:421px;color:#000;font:12px 'Liberation Sans';line-height:13px;transform:scaleX(0.8900);">346,50 KiB</div>
<div class="tx" style="left:573.70px;top:421px;color:#000;font:12px 'Liberation Sans';line-height:13px;transform:scaleX(0.8900);">exe File</div>
<div class="tx" style="left:673.50px;top:421px;color:#000;font:12px 'Liberation Sans';line-height:13px;transform:scaleX(0.8938);">07.03.2019 19:45</div>
<div class="tx" style="left:514.25px;top:441px;color:#000;font:12px 'Liberation Sans';line-height:13px;transform:scaleX(0.8900);">250,50 KiB</div>
<div class="tx" style="left:573.70px;top:441px;color:#000;font:12px 'Liberation Sans';line-height:13px;transform:scaleX(0.8900);">exe File</div>
<div class="tx" style="left:673.50px;top:441px;color:#000;font:12px 'Liberation Sans';line-height:13px;transform:scaleX(0.8938);">07.03.2019 19:45</div>
<div class="tx" style="left:526.13px;top:461px;color:#000;font:12px 'Liberation Sans';line-height:13px;transform:scaleX(0.8900);">6,37 KiB</div>
<div class="tx" style="left:573.70px;top:461px;color:#000;font:12px 'Liberation Sans';line-height:13px;transform:scaleX(0.8900);">pl File</div>
<div class="tx" style="left:673.50px;top:461px;color:#000;font:12px 'Liberation Sans';line-height:13px;transform:scaleX(0.8938);">07.03.2019 19:05</div>
<div style="position:absolute;left:1px;top:479px;width:224px;height:1px;background:#fff"></div>
<div style="position:absolute;left:809px;top:479px;width:269px;height:1px;background:#fff"></div>
<div style="position:absolute;left:809px;top:102px;width:269px;height:187px;background:#f0f0f0"></div>
<div style="position:absolute;left:809px;top:103px;width:269px;height:1px;background:#fff"></div>
<div style="position:absolute;left:809px;top:125px;width:269px;height:1px;background:#fff"></div>
<div style="position:absolute;left:809px;top:104px;width:87px;height:21px;background:linear-gradient(#f0f0f0,#fff 50%,#fff)"></div>
<div style="position:absolute;left:896px;top:104px;width:1px;height:21px;background:#fff"></div>
<svg style="position:absolute;left:818px;top:107px;" width="12" height="14" viewBox="0 0 12 14"><rect x="0" y="1.5" width="12" height="12.5" rx="1.2" fill="#10b0e4"/><rect x="1.6" y="5" width="8.8" height="7.4" fill="#f0f0f0"/><rect x="2" y="0" width="1.8" height="3" fill="#10b0e4"/><rect x="8.2" y="0" width="1.8" height="3" fill="#10b0e4"/><rect x="2.8" y="6.6" width="1.6" height="1.6" fill="#10b0e4"/><rect x="5.2" y="6.6" width="1.6" height="1.6" fill="#10b0e4"/><rect x="7.6" y="6.6" width="1.6" height="1.6" fill="#10b0e4"/></svg>
<div class="tx" style="left:837.00px;top:109px;color:#000;font:12px 'Liberation Sans';line-height:13px;transform:scaleX(0.8687);">Calendar 0</div>
<svg style="position:absolute;left:1030px;top:112px;" width="7" height="4" viewBox="0 0 7 4"><path d="M0 0H7L3.5 4z" fill="#000"/></svg>
<svg style="position:absolute;left:1047px;top:109px;" width="9" height="9" viewBox="0 0 9 9"><path d="M2.5 3V0.5h6v5.5H6" fill="none" stroke="#000" stroke-width="1.1"/><rect x="2" y="0" width="7" height="1.6" fill="#000"/><rect x="0.6" y="3.6" width="5.8" height="5" fill="none" stroke="#000" stroke-width="1.2"/><rect x="0" y="3" width="7" height="2" fill="#000"/></svg>
<svg style="position:absolute;left:1064px;top:110px;" width="8" height="7" viewBox="0 0 8 7"><path d="M0.6 0.6L7.4 6.4M7.4 0.6L0.6 6.4" stroke="#a0a0a0" stroke-width="1.7"/></svg>
<div style="position:absolute;left:809px;top:126px;width:252px;height:45px;background:#f0f0f0"></div>
<div style="position:absolute;left:809px;top:171px;width:252px;height:102px;background:#fff"></div>
<div class="tx" style="left:916.50px;top:132px;color:#000;font:bold 12px 'Liberation Sans';line-height:13px;transform:scaleX(0.9938);">Dezember</div>
<svg style="position:absolute;left:972px;top:141px;" width="6" height="4" viewBox="0 0 6 4"><path d="M0 0H6L3 3.5z" fill="#000"/></svg>
<div class="tx" style="left:987.60px;top:132px;color:#000;font:bold 12px 'Liberation Sans';line-height:13px;transform:scaleX(1.0152);">2019</div>
<div class="tx" style="left:901.66px;top:154px;color:#000;font:12px 'Liberation Sans';line-height:13px;transform:scaleX(0.8900);">Di</div>
<div class="tx" style="left:939.97px;top:154px;color:#000;font:12px 'Liberation Sans';line-height:13px;transform:scaleX(0.8900);">Mi</div>
<div class="tx" style="left:977.77px;top:154px;color:#000;font:12px 'Liberation Sans';line-height:13px;transform:scaleX(0.8900);">Do</div>
<div class="tx" style="left:1018.36px;top:154px;color:#000;font:12px 'Liberation Sans';line-height:13px;transform:scaleX(0.8900);">Fr</div>
<div class="tx" style="left:1056.97px;top:154px;color:#d0021b;font:12px 'Liberation Sans';line-height:13px;transform:scaleX(0.8900);">Sa</div>
<div style="position:absolute;left:1044px;top:217px;width:17px;height:23px;background:#e6e6e6"></div>
<div class="tx" style="left:900.76px;top:177px;color:#808080;font:12px 'Liberation Sans';line-height:13px;transform:scaleX(0.8900);">26</div>
<div class="tx" style="left:939.66px;top:177px;color:#808080;font:12px 'Liberation Sans';line-height:13px;transform:scaleX(0.8900);">27</div>
<div class="tx" style="left:978.66px;top:177px;color:#808080;font:12px 'Liberation Sans';line-height:13px;transform:scaleX(0.8900);">28</div>
<div class="tx" style="left:1017.46px;top:177px;color:#808080;font:12px 'Liberation Sans';line-height:13px;transform:scaleX(0.8900);">29</div>
<div class="tx" style="left:1057.56px;top:177px;color:#808080;font:12px 'Liberation Sans';line-height:13px;transform:scaleX(0.8900);">30</div>
<div class="tx" style="left:903.73px;top:200px;color:#000;font:12px 'Liberation Sans';line-height:13px;transform:scaleX(0.8900);">3</div>
<div class="tx" style="left:942.63px;top:200px;color:#000;font:12px 'Liberation Sans';line-height:13px;transform:scaleX(0.8900);">4</div>
<div class="tx" style="left:981.63px;top:200px;color:#000;font:12px 'Liberation Sans';line-height:13px;transform:scaleX(0.8900);">5</div>
<div class="tx" style="left:1020.43px;top:200px;color:#000;font:12px 'Liberation Sans';line-height:13px;transform:scaleX(0.8900);">6</div>
<div class="tx" style="left:1060.53px;top:200px;color:#d0021b;font:12px 'Liberation Sans';line-height:13px;transform:scaleX(0.8900);">7</div>
<div class="tx" style="left:900.76px;top:223px;color:#000;font:12px 'Liberation Sans';line-height:13px;transform:scaleX(0.8900);">10</div>
<div class="tx" style="left:940.06px;top:223px;color:#000;font:12px 'Liberation Sans';line-height:13px;transform:scaleX(0.8900);">11</div>
<div class="tx" style="left:978.66px;top:223px;color:#000;font:12px 'Liberation Sans';line-height:13px;transform:scaleX(0.8900);">12</div>
<div class="tx" style="left:1017.46px;top:223px;color:#000;font:12px 'Liberation Sans';line-height:13px;transform:scaleX(0.8900);">13</div>
<div class="tx" style="left:1057.56px;top:223px;color:#000;font:12px 'Liberation Sans';line-height:13px;transform:scaleX(0.8900);">14</div>
<div class="tx" style="left:900.76px;top:246px;color:#000;font:12px 'Liberation Sans';line-height:13px;transform:scaleX(0.8900);">17</div>
<div class="tx" style="left:939.66px;top:246px;color:#000;font:12px 'Liberation Sans';line-height:13px;transform:scaleX(0.8900);">18</div>
<div class="tx" style="left:978.66px;top:246px;color:#000;font:12px 'Liberation Sans';line-height:13px;transform:scaleX(0.8900);">19</div>
<div class="tx" style="left:1017.46px;top:246px;color:#000;font:12px 'Liberation Sans';line-height:13px;transform:scaleX(0.8900);">20</div>
<div class="tx" style="left:1057.56px;top:246px;color:#d0021b;font:12px 'Liberation Sans';line-height:13px;transform:scaleX(0.8900);">21</div>
<div style="position:absolute;left:1061px;top:126px;width:16px;height:147px;background:#f0f0f0"></div>
<div style="position:absolute;left:1061px;top:143px;width:16px;height:88px;background:#cdcdcd"></div>
<svg style="position:absolute;left:1064px;top:133px;" width="8" height="5" viewBox="0 0 8 5"><path d="M0.7 4.3L4 1L7.3 4.3" fill="none" stroke="#606060" stroke-width="1.9"/></svg>
<svg style="position:absolute;left:1064px;top:260px;" width="8" height="5" viewBox="0 0 8 5"><path d="M0.7 0.7L4 4L7.3 0.7" fill="none" stroke="#606060" stroke-width="1.9"/></svg>
<div style="position:absolute;left:809px;top:273px;width:269px;height:14px;background:#f0f0f0"></div>
<div style="position:absolute;left:809px;top:273px;width:192px;height:14px;background:#cdcdcd"></div>
<svg style="position:absolute;left:1049px;top:277px;" width="6" height="7" viewBox="0 0 6 7"><path d="M0.8 0.7L4.5 3.5L0.8 6.3" fill="none" stroke="#606060" stroke-width="1.9"/></svg>
<div style="position:absolute;left:809px;top:287px;width:269px;height:2px;background:#fff"></div>
<div style="position:absolute;left:809px;top:294px;width:269px;height:185px;background:#f0f0f0"></div>
<div style="position:absolute;left:809px;top:294px;width:269px;height:1px;background:#fff"></div>
<div style="position:absolute;left:809px;top:316px;width:269px;height:1px;background:#fff"></div>
<div style="position:absolute;left:809px;top:295px;width:112px;height:21px;background:linear-gradient(#f0f0f0,#fff 50%,#fff)"></div>
<div style="position:absolute;left:921px;top:295px;width:1px;height:21px;background:#fff"></div>
<div class="tx" style="left:862.00px;top:300px;color:#000;font:12px 'Liberation Sans';line-height:13px;transform:scaleX(0.9017);">Label 5</div>
<svg style="position:absolute;left:905px;top:302px;" width="8" height="7" viewBox="0 0 8 7"><path d="M0.6 0.6L7.4 6.4M7.4 0.6L0.6 6.4" stroke="#000" stroke-width="1.7"/></svg>
<svg style="position:absolute;left:1030px;top:303px;" width="7" height="4" viewBox="0 0 7 4"><path d="M0 0H7L3.5 4z" fill="#000"/></svg>
<svg style="position:absolute;left:1047px;top:300px;" width="9" height="9" viewBox="0 0 9 9"><path d="M2.5 3V0.5h6v5.5H6" fill="none" stroke="#000" stroke-width="1.1"/><rect x="2" y="0" width="7" height="1.6" fill="#000"/><rect x="0.6" y="3.6" width="5.8" height="5" fill="none" stroke="#000" stroke-width="1.2"/><rect x="0" y="3" width="7" height="2" fill="#000"/></svg>
<svg style="position:absolute;left:1064px;top:301px;" width="8" height="7" viewBox="0 0 8 7"><path d="M0.6 0.6L7.4 6.4M7.4 0.6L0.6 6.4" stroke="#000" stroke-width="1.7"/></svg>
<div style="position:absolute;left:809px;top:317px;width:252px;height:162px;overflow:hidden">
<div class="tx" style="left:1.00px;top:1px;color:#000;font:12px 'Liberation Sans';line-height:13px;transform:scaleX(0.8951);">Label 5 18:51:02:487 - Lorem ipsum dolor sit amet,</div>
<div class="tx" style="left:1.00px;top:14px;color:#000;font:12px 'Liberation Sans';line-height:13px;transform:scaleX(0.8837);">consectetuer adipiscing elit. Aenean commodo ligula</div>
<div class="tx" style="left:1.00px;top:27px;color:#000;font:12px 'Liberation Sans';line-height:13px;transform:scaleX(0.8887);">eget dolor. Aenean massa. Cum sociis natoque</div>
<div class="tx" style="left:1.00px;top:40px;color:#000;font:12px 'Liberation Sans';line-height:13px;transform:scaleX(0.8930);">penatibus et magnis dis parturient montes, nascetur</div>
<div class="tx" style="left:1.00px;top:53px;color:#000;font:12px 'Liberation Sans';line-height:13px;transform:scaleX(0.8803);">ridiculus mus. Donec quam felis, ultricies nec,</div>
<div class="tx" style="left:1.00px;top:66px;color:#000;font:12px 'Liberation Sans';line-height:13px;transform:scaleX(0.8966);">pellentesque eu, pretium quis, sem. Nulla consequat</div>
<div class="tx" style="left:1.00px;top:79px;color:#000;font:12px 'Liberation Sans';line-height:13px;transform:scaleX(0.8937);">massa quis enim. Donec pede justo, fringilla vel,</div>
<div class="tx" style="left:1.00px;top:92px;color:#000;font:12px 'Liberation Sans';line-height:13px;transform:scaleX(0.9269);">aliquet nec, vulputate eget, arcu. In enim justo,</div>
<div class="tx" style="left:1.00px;top:105px;color:#000;font:12px 'Liberation Sans';line-height:13px;transform:scaleX(0.9257);">rhoncus ut, imperdiet a, venenatis vitae, justo.</div>
<div class="tx" style="left:1.00px;top:118px;color:#000;font:12px 'Liberation Sans';line-height:13px;transform:scaleX(0.8818);">Nullam dictum felis eu pede mollis pretium. Integer</div>
<div class="tx" style="left:1.00px;top:131px;color:#000;font:12px 'Liberation Sans';line-height:13px;transform:scaleX(0.8839);">tincidunt. Cras dapibus. Vivamus elementum semper</div>
<div class="tx" style="left:1.00px;top:144px;color:#000;font:12px 'Liberation Sans';line-height:13px;transform:scaleX(0.9039);">nisi. Aenean vulputate eleifend tellus. Aenean leo</div>
<div class="tx" style="left:1.00px;top:157px;color:#000;font:12px 'Liberation Sans';line-height:13px;transform:scaleX(0.9569);">ligula, porttitor eu, consequat vitae, eleifend ac,</div>
</div>
<div style="position:absolute;left:1061px;top:317px;width:16px;height:162px;background:#f0f0f0"></div>
<div style="position:absolute;left:1061px;top:334px;width:16px;height:99px;background:#cdcdcd"></div>
<svg style="position:absolute;left:1064px;top:324px;" width="8" height="5" viewBox="0 0 8 5"><path d="M0.7 4.3L4 1L7.3 4.3" fill="none" stroke="#606060" stroke-width="1.9"/></svg>
<svg style="position:absolute;left:1064px;top:468px;" width="8" height="5" viewBox="0 0 8 5"><path d="M0.7 0.7L4 4L7.3 0.7" fill="none" stroke="#606060" stroke-width="1.9"/></svg>
<div style="position:absolute;left:1077px;top:102px;width:1px;height:515px;background:#fff"></div>
<div style="position:absolute;left:224px;top:102px;width:1px;height:378px;background:#fff"></div>
<div style="position:absolute;left:809px;top:102px;width:1px;height:378px;background:#fff"></div>
<div style="position:absolute;left:803px;top:102px;width:1px;height:378px;background:#fff"></div>
<div style="position:absolute;left:477px;top:120px;width:408px;height:302px;box-sizing:border-box;border:1px solid #5f5f5f;background:#fff;box-shadow:0 3px 14px rgba(0,0,0,0.28)"></div>
<div style="position:absolute;left:477px;top:420px;width:408px;height:1px;background:#5f5f5f"></div>
<svg style="position:absolute;left:486px;top:128px;" width="16" height="13" viewBox="0 0 16 13"><rect x="0.5" y="0.5" width="15" height="12" fill="#f4f4f4" stroke="#8a8a8a"/><rect x="2" y="3" width="5" height="8" fill="#3d9a6a"/><rect x="2" y="3" width="5" height="3" fill="#4a86c8"/><rect x="8" y="3" width="3" height="8" fill="#dcdcdc"/><rect x="12" y="3" width="2" height="4" fill="#7aaed0"/></svg>
<div class="tx" style="left:507.00px;top:130px;color:#000;font:12px 'Liberation Sans';line-height:13px;transform:scaleX(0.9433);">Table 0</div>
<div style="position:absolute;left:765px;top:135px;width:10px;height:1px;background:#b8b8b8"></div>
<div style="position:absolute;left:810px;top:130px;width:10px;height:10px;box-sizing:border-box;border:1px solid #111"></div>
<svg style="position:absolute;left:856px;top:130px;" width="11" height="11" viewBox="0 0 11 11"><path d="M0.5 0.5L10.5 10.5M10.5 0.5L0.5 10.5" stroke="#111" stroke-width="1.05"/></svg>
<div style="position:absolute;left:478px;top:151px;width:406px;height:1px;background:#9a9a9a"></div>
<div style="position:absolute;left:478px;top:152px;width:406px;height:2px;background:#f0f0f0"></div>
<div style="position:absolute;left:478px;top:154px;width:406px;height:266px;background:#f0f0f0"></div>
<div style="position:absolute;left:479px;top:154px;width:404px;height:265px;box-sizing:border-box;border:1px solid #828790;background:#fff"></div>
<div style="position:absolute;left:480px;top:155px;width:386px;height:246px;overflow:hidden">
<div style="position:absolute;left:21px;top:0px;width:1px;height:246px;background:#e3e3e3"></div>
<div style="position:absolute;left:121px;top:0px;width:1px;height:23px;background:#e8e8e8"></div>
<div style="position:absolute;left:121px;top:23px;width:1px;height:223px;background:#d8d8d8"></div>
<div style="position:absolute;left:221px;top:0px;width:1px;height:23px;background:#e8e8e8"></div>
<div style="position:absolute;left:221px;top:23px;width:1px;height:223px;background:#d8d8d8"></div>
<div style="position:absolute;left:321px;top:0px;width:1px;height:23px;background:#e8e8e8"></div>
<div style="position:absolute;left:321px;top:23px;width:1px;height:223px;background:#d8d8d8"></div>
<div style="position:absolute;left:22px;top:52px;width:386px;height:1px;background:#d8d8d8"></div>
<div style="position:absolute;left:22px;top:82px;width:386px;height:1px;background:#d8d8d8"></div>
<div style="position:absolute;left:22px;top:112px;width:386px;height:1px;background:#d8d8d8"></div>
<div style="position:absolute;left:22px;top:142px;width:386px;height:1px;background:#d8d8d8"></div>
<div style="position:absolute;left:22px;top:172px;width:386px;height:1px;background:#d8d8d8"></div>
<div style="position:absolute;left:22px;top:202px;width:386px;height:1px;background:#d8d8d8"></div>
<div style="position:absolute;left:22px;top:232px;width:386px;height:1px;background:#d8d8d8"></div>
<div style="position:absolute;left:22px;top:262px;width:386px;height:1px;background:#d8d8d8"></div>
<div class="tx" style="left:59.03px;top:6px;color:#000;font:12px 'Liberation Sans';line-height:13px;transform:scaleX(0.8900);">Col 1</div>
<div class="tx" style="left:159.03px;top:6px;color:#000;font:12px 'Liberation Sans';line-height:13px;transform:scaleX(0.8900);">Col 2</div>
<div class="tx" style="left:259.03px;top:6px;color:#000;font:12px 'Liberation Sans';line-height:13px;transform:scaleX(0.8900);">Col 3</div>
<div class="tx" style="left:359.03px;top:6px;color:#000;font:12px 'Liberation Sans';line-height:13px;transform:scaleX(0.8900);">Col 4</div>
<div class="tx" style="left:4.00px;top:33px;color:#000;font:12px 'Liberation Sans';line-height:13px;transform:scaleX(0.8900);">1</div>
<div class="tx" style="left:25.20px;top:32px;color:#000;font:12px 'Liberation Sans';line-height:13px;transform:scaleX(0.8900);">T 1-1</div>
<div class="tx" style="left:125.20px;top:32px;color:#000;font:12px 'Liberation Sans';line-height:13px;transform:scaleX(0.8900);">T 1-2</div>
<div class="tx" style="left:225.20px;top:32px;color:#000;font:12px 'Liberation Sans';line-height:13px;transform:scaleX(0.8900);">T 1-3</div>
<div class="tx" style="left:325.20px;top:32px;color:#000;font:12px 'Liberation Sans';line-height:13px;transform:scaleX(0.8900);">T 1-4</div>
<div class="tx" style="left:4.00px;top:63px;color:#000;font:12px 'Liberation Sans';line-height:13px;transform:scaleX(0.8900);">2</div>
<div class="tx" style="left:25.20px;top:62px;color:#000;font:12px 'Liberation Sans';line-height:13px;transform:scaleX(0.8900);">T 2-1</div>
<div class="tx" style="left:125.20px;top:62px;color:#000;font:12px 'Liberation Sans';line-height:13px;transform:scaleX(0.8900);">T 2-2</div>
<div class="tx" style="left:225.20px;top:62px;color:#000;font:12px 'Liberation Sans';line-height:13px;transform:scaleX(0.8900);">T 2-3</div>
<div class="tx" style="left:325.20px;top:62px;color:#000;font:12px 'Liberation Sans';line-height:13px;transform:scaleX(0.8900);">T 2-4</div>
<div class="tx" style="left:4.00px;top:93px;color:#000;font:12px 'Liberation Sans';line-height:13px;transform:scaleX(0.8900);">3</div>
<div class="tx" style="left:25.20px;top:92px;color:#000;font:12px 'Liberation Sans';line-height:13px;transform:scaleX(0.8900);">T 3-1</div>
<div class="tx" style="left:125.20px;top:92px;color:#000;font:12px 'Liberation Sans';line-height:13px;transform:scaleX(0.8900);">T 3-2</div>
<div class="tx" style="left:225.20px;top:92px;color:#000;font:12px 'Liberation Sans';line-height:13px;transform:scaleX(0.8900);">T 3-3</div>
<div class="tx" style="left:325.20px;top:92px;color:#000;font:12px 'Liberation Sans';line-height:13px;transform:scaleX(0.8900);">T 3-4</div>
<div class="tx" style="left:4.00px;top:123px;color:#000;font:12px 'Liberation Sans';line-height:13px;transform:scaleX(0.8900);">4</div>
<div class="tx" style="left:25.20px;top:122px;color:#000;font:12px 'Liberation Sans';line-height:13px;transform:scaleX(0.8900);">T 4-1</div>
<div class="tx" style="left:125.20px;top:122px;color:#000;font:12px 'Liberation Sans';line-height:13px;transform:scaleX(0.8900);">T 4-2</div>
<div class="tx" style="left:225.20px;top:122px;color:#000;font:12px 'Liberation Sans';line-height:13px;transform:scaleX(0.8900);">T 4-3</div>
<div class="tx" style="left:325.20px;top:122px;color:#000;font:12px 'Liberation Sans';line-height:13px;transform:scaleX(0.8900);">T 4-4</div>
<div class="tx" style="left:4.00px;top:153px;color:#000;font:12px 'Liberation Sans';line-height:13px;transform:scaleX(0.8900);">5</div>
<div class="tx" style="left:25.20px;top:152px;color:#000;font:12px 'Liberation Sans';line-height:13px;transform:scaleX(0.8900);">T 5-1</div>
<div class="tx" style="left:125.20px;top:152px;color:#000;font:12px 'Liberation Sans';line-height:13px;transform:scaleX(0.8900);">T 5-2</div>
<div class="tx" style="left:225.20px;top:152px;color:#000;font:12px 'Liberation Sans';line-height:13px;transform:scaleX(0.8900);">T 5-3</div>
<div class="tx" style="left:325.20px;top:152px;color:#000;font:12px 'Liberation Sans';line-height:13px;transform:scaleX(0.8900);">T 5-4</div>
<div class="tx" style="left:4.00px;top:183px;color:#000;font:12px 'Liberation Sans';line-height:13px;transform:scaleX(0.8900);">6</div>
<div class="tx" style="left:25.20px;top:182px;color:#000;font:12px 'Liberation Sans';line-height:13px;transform:scaleX(0.8900);">T 6-1</div>
<div class="tx" style="left:125.20px;top:182px;color:#000;font:12px 'Liberation Sans';line-height:13px;transform:scaleX(0.8900);">T 6-2</div>
<div class="tx" style="left:225.20px;top:182px;color:#000;font:12px 'Liberation Sans';line-height:13px;transform:scaleX(0.8900);">T 6-3</div>
<div class="tx" style="left:325.20px;top:182px;color:#000;font:12px 'Liberation Sans';line-height:13px;transform:scaleX(0.8900);">T 6-4</div>
<div class="tx" style="left:4.00px;top:213px;color:#000;font:12px 'Liberation Sans';line-height:13px;transform:scaleX(0.8900);">7</div>
<div class="tx" style="left:25.20px;top:212px;color:#000;font:12px 'Liberation Sans';line-height:13px;transform:scaleX(0.8900);">T 7-1</div>
<div class="tx" style="left:125.20px;top:212px;color:#000;font:12px 'Liberation Sans';line-height:13px;transform:scaleX(0.8900);">T 7-2</div>
<div class="tx" style="left:225.20px;top:212px;color:#000;font:12px 'Liberation Sans';line-height:13px;transform:scaleX(0.8900);">T 7-3</div>
<div class="tx" style="left:325.20px;top:212px;color:#000;font:12px 'Liberation Sans';line-height:13px;transform:scaleX(0.8900);">T 7-4</div>
<div class="tx" style="left:4.00px;top:243px;color:#000;font:12px 'Liberation Sans';line-height:13px;transform:scaleX(0.8900);">8</div>
<div class="tx" style="left:25.20px;top:242px;color:#000;font:12px 'Liberation Sans';line-height:13px;transform:scaleX(0.8900);">T 8-1</div>
<div class="tx" style="left:125.20px;top:242px;color:#000;font:12px 'Liberation Sans';line-height:13px;transform:scaleX(0.8900);">T 8-2</div>
<div class="tx" style="left:225.20px;top:242px;color:#000;font:12px 'Liberation Sans';line-height:13px;transform:scaleX(0.8900);">T 8-3</div>
<div class="tx" style="left:325.20px;top:242px;color:#000;font:12px 'Liberation Sans';line-height:13px;transform:scaleX(0.8900);">T 8-4</div>
</div>
<div style="position:absolute;left:866px;top:155px;width:16px;height:246px;background:#f0f0f0"></div>
<div style="position:absolute;left:866px;top:172px;width:16px;height:48px;background:#cdcdcd"></div>
<svg style="position:absolute;left:869px;top:161px;" width="9" height="6" viewBox="0 0 9 6"><path d="M1 5L4.5 1.5L8 5" fill="none" stroke="#606060" stroke-width="2"/></svg>
<svg style="position:absolute;left:869px;top:390px;" width="9" height="6" viewBox="0 0 9 6"><path d="M1 1L4.5 4.5L8 1" fill="none" stroke="#606060" stroke-width="2"/></svg>
<div style="position:absolute;left:480px;top:401px;width:402px;height:17px;background:#f0f0f0"></div>
<div style="position:absolute;left:497px;top:401px;width:210px;height:17px;background:#cdcdcd"></div>
<svg style="position:absolute;left:485px;top:406px;" width="6" height="8" viewBox="0 0 6 8"><path d="M5.2 0.7L1.2 4L5.2 7.3" fill="none" stroke="#606060" stroke-width="1.9"/></svg>
<svg style="position:absolute;left:854px;top:406px;" width="6" height="8" viewBox="0 0 6 8"><path d="M0.8 0.7L4.8 4L0.8 7.3" fill="none" stroke="#606060" stroke-width="1.9"/></svg>
<div style="position:absolute;left:0px;top:102px;width:1078px;height:172px;box-sizing:border-box;border:1px solid #0064b3;background:rgba(24,153,255,0.251)"></div>
<svg style="position:absolute;left:519px;top:106px;" width="39" height="39" viewBox="0 0 39 39"><rect width="39" height="39" fill="rgba(0,0,0,0.25)"/><rect x="5.5" y="5.5" width="28" height="14" fill="#bfddf5" stroke="#0078d7"/><rect x="5" y="5" width="29" height="4" fill="#0078d7"/><path d="M19.5 23.3L26.3 29.3H12.7z" fill="#fff"/></svg>
<svg style="position:absolute;left:4px;top:340px;" width="39" height="39" viewBox="0 0 39 39"><rect width="39" height="39" fill="rgba(0,0,0,0.25)"/><rect x="5.5" y="5.5" width="14" height="28" fill="#bfddf5" stroke="#0078d7"/><rect x="5" y="5" width="15" height="4" fill="#0078d7"/><path d="M23.3 19.5L29.3 12.7V26.3z" fill="#fff"/></svg>
<svg style="position:absolute;left:1035px;top:340px;" width="39" height="39" viewBox="0 0 39 39"><rect width="39" height="39" fill="rgba(0,0,0,0.25)"/><rect x="19.5" y="5.5" width="14" height="28" fill="#bfddf5" stroke="#0078d7"/><rect x="19" y="5" width="15" height="4" fill="#0078d7"/><path d="M15.7 19.5L9.7 12.7V26.3z" fill="#fff"/></svg>
<svg style="position:absolute;left:519px;top:575px;" width="39" height="39" viewBox="0 0 39 39"><rect width="39" height="39" fill="rgba(0,0,0,0.25)"/><rect x="5.5" y="19.5" width="28" height="14" fill="#bfddf5" stroke="#0078d7"/><rect x="5" y="19" width="29" height="4" fill="#0078d7"/><path d="M19.5 15.7L26.3 9.7H12.7z" fill="#fff"/></svg>
<svg style="position:absolute;left:498px;top:233px;" width="39" height="39" viewBox="0 0 39 39"><rect width="39" height="39" fill="rgba(0,0,0,0.25)"/><rect x="5.5" y="5.5" width="28" height="28" fill="#fff" stroke="#0078d7"/><rect x="6" y="9" width="27" height="10.5" fill="#bfddf5"/><path d="M6 19.5H33" stroke="#0078d7" stroke-dasharray="4 2"/><rect x="5" y="5" width="29" height="4" fill="#0078d7"/></svg>
<svg style="position:absolute;left:459px;top:272px;" width="39" height="39" viewBox="0 0 39 39"><rect width="39" height="39" fill="rgba(0,0,0,0.25)"/><rect x="5.5" y="5.5" width="28" height="28" fill="#fff" stroke="#0078d7"/><rect x="6" y="9" width="13.5" height="24" fill="#bfddf5"/><path d="M19.5 9V33" stroke="#0078d7" stroke-dasharray="4 2"/><rect x="5" y="5" width="29" height="4" fill="#0078d7"/></svg>
<svg style="position:absolute;left:498px;top:272px;" width="39" height="39" viewBox="0 0 39 39"><rect width="39" height="39" fill="rgba(0,0,0,0.25)"/><rect x="5.5" y="5.5" width="28" height="28" fill="#fff" stroke="#0078d7"/><rect x="5" y="5" width="29" height="4" fill="#0078d7"/></svg>
<svg style="position:absolute;left:537px;top:272px;" width="39" height="39" viewBox="0 0 39 39"><rect width="39" height="39" fill="rgba(0,0,0,0.25)"/><rect x="5.5" y="5.5" width="28" height="28" fill="#fff" stroke="#0078d7"/><rect x="20" y="9" width="13" height="24" fill="#bfddf5"/><path d="M19.5 9V33" stroke="#0078d7" stroke-dasharray="4 2"/><rect x="5" y="5" width="29" height="4" fill="#0078d7"/></svg>
<svg style="position:absolute;left:498px;top:311px;" width="39" height="39" viewBox="0 0 39 39"><rect width="39" height="39" fill="rgba(0,0,0,0.25)"/><rect x="5.5" y="5.5" width="28" height="28" fill="#fff" stroke="#0078d7"/><rect x="6" y="20" width="27" height="13" fill="#bfddf5"/><path d="M6 19.5H33" stroke="#0078d7" stroke-dasharray="4 2"/><rect x="5" y="5" width="29" height="4" fill="#0078d7"/></svg>
<div style="position:absolute;left:1072px;top:627px;width:2px;height:2px;background:#b8b8b8"></div>
<div style="position:absolute;left:1069px;top:630px;width:2px;height:2px;background:#b8b8b8"></div>
<div style="position:absolute;left:1072px;top:630px;width:2px;height:2px;background:#b8b8b8"></div>
<div style="position:absolute;left:1066px;top:633px;width:2px;height:2px;background:#b8b8b8"></div>
<div style="position:absolute;left:1069px;top:633px;width:2px;height:2px;background:#b8b8b8"></div>
<div style="position:absolute;left:1072px;top:633px;width:2px;height:2px;background:#b8b8b8"></div>
<div style="position:absolute;left:0px;top:0px;width:1079px;height:638px;box-sizing:border-box;border:1px solid #1aa1e6"></div>
<svg style="position:absolute;left:252px;top:11px;filter:drop-shadow(1px 2px 2px rgba(0,0,0,0.25))" width="13" height="20" viewBox="0 0 13 20"><path d="M0.5 0.5V16.5L4.5 12.5L7.5 18.5L9.5 17.5L6.5 11.5H11.5Z" fill="#f2f2f2" stroke="#777" stroke-width="1"/></svg>
<svg style="position:absolute;left:549px;top:131px;filter:drop-shadow(1px 2px 2px rgba(0,0,0,0.3))" width="13" height="20" viewBox="0 0 13 20"><path d="M0.5 0.5V16.5L4.5 12.5L7.5 18.5L9.5 17.5L6.5 11.5H11.5Z" fill="#fff" stroke="#000" stroke-width="1"/></svg>
</body></html>
